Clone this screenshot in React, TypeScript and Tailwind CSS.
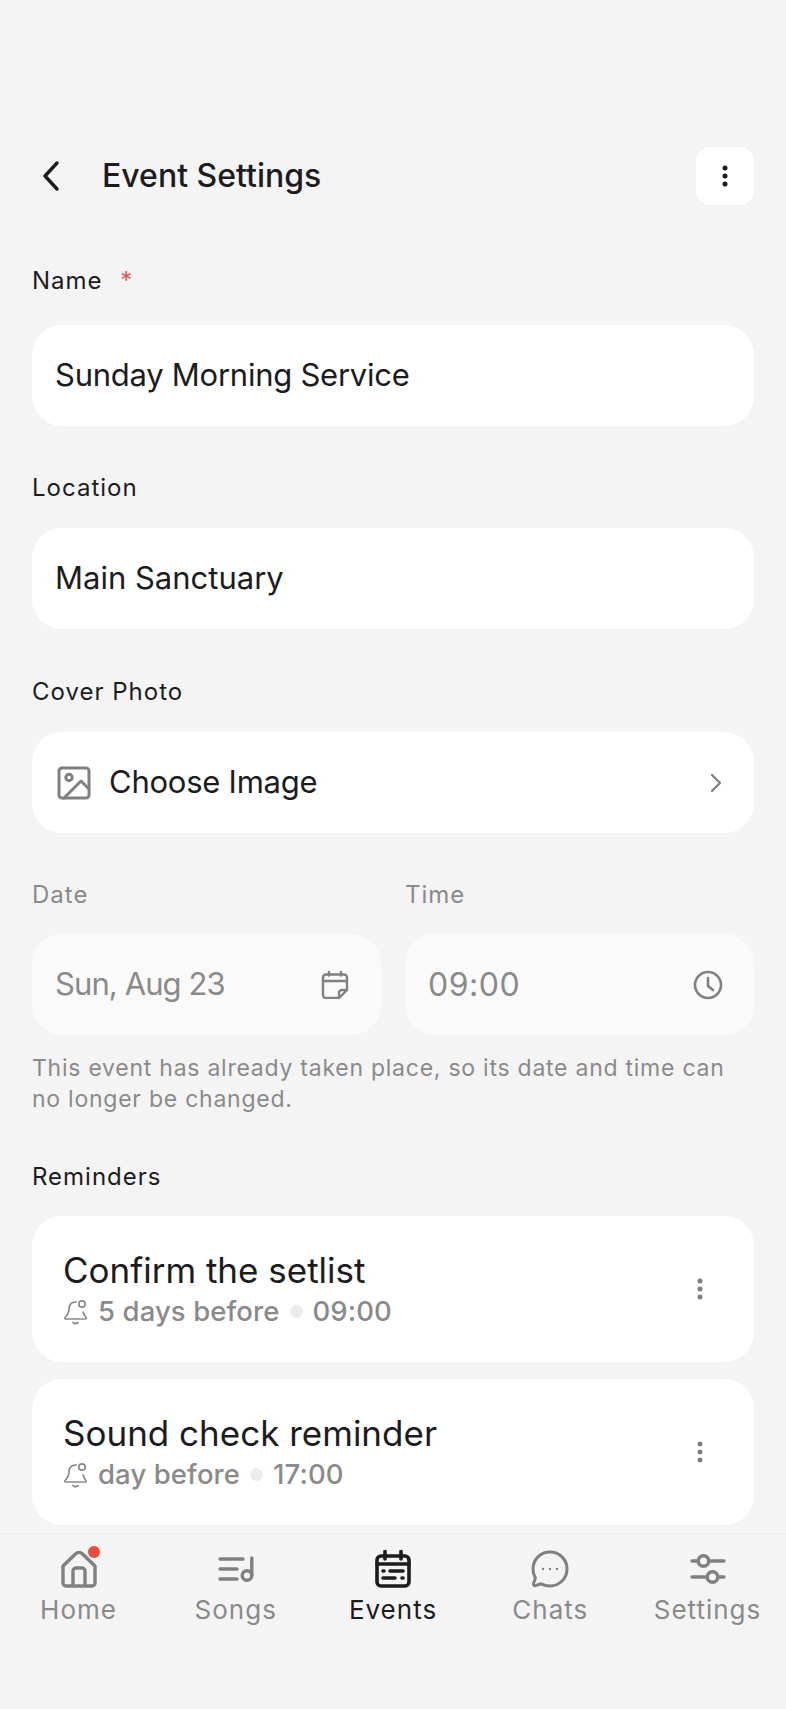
import { ChevronRight } from "lucide-react";

const font = "font-['Inter','Noto_Sans',sans-serif]";

function Label({ children, muted }: { children: React.ReactNode; muted?: boolean }) {
  return (
    <div className={`h-[32px] text-[24px] leading-[32px] tracking-[1px] ${muted ? "text-[#8a8a8a]" : "text-[#1c1c1e]"}`}>
      {children}
    </div>
  );
}

function Dots({ color }: { color: string }) {
  return (
    <svg width="6" height="24" viewBox="0 0 6 24" fill={color}>
      <circle cx="3" cy="4" r="2.5" />
      <circle cx="3" cy="12" r="2.5" />
      <circle cx="3" cy="20" r="2.5" />
    </svg>
  );
}

function ImageIcon() {
  return (
    <svg width="34" height="34" viewBox="0 0 34 34" fill="none" stroke="#808080" strokeWidth="3" strokeLinejoin="round" strokeLinecap="round">
      <rect x="2" y="2" width="30" height="30" rx="3" />
      <circle cx="12" cy="11.5" r="3.2" />
      <path d="M7 32 L24 15 L32 23" />
    </svg>
  );
}

function CalendarIcon() {
  return (
    <svg width="28" height="28" viewBox="0 0 28 28" fill="none" stroke="#808080" strokeWidth="2.4" strokeLinejoin="round" strokeLinecap="round">
      <path d="M5 3.5 H23 A3 3 0 0 1 26 6.5 V19 L18 27 H5 A3 3 0 0 1 2 24 V6.5 A3 3 0 0 1 5 3.5 Z" />
      <path d="M2 10 H26 M8 1 V4.5 M20 1 V4.5 M18 27 V22 A3 3 0 0 1 21 19 H26" />
    </svg>
  );
}

function ClockIcon() {
  return (
    <svg width="30" height="30" viewBox="0 0 30 30" fill="none" stroke="#808080" strokeWidth="2.6" strokeLinecap="round" strokeLinejoin="round">
      <circle cx="15" cy="15" r="13" />
      <path d="M15 8 V16 L20 20" />
    </svg>
  );
}

function BellIcon() {
  return (
    <svg width="25" height="26" viewBox="0 0 25 26" fill="none" stroke="#8a8a8a" strokeWidth="1.7" strokeLinecap="round" strokeLinejoin="round">
      <path d="M13 3.2 C8.5 2.6 6 6 6 10 C6 14 4.5 16 2 18.5 C1.6 19.2 2 20 3 20 H22 C23 20 23.4 19.2 23 18.5 C21.5 17 20.6 15.6 20.2 13" />
      <circle cx="19" cy="5" r="3.2" />
      <path d="M10 23.5 C11 25 14 25 15 23.5" />
    </svg>
  );
}

function Reminder({ title, when, time }: { title: string; when: string; time: string }) {
  return (
    <div className="flex h-[146px] shrink-0 items-center justify-between rounded-[30px] bg-white pl-[31px] pr-[51px]">
      <div className="flex flex-col">
        <div className="text-[35px] leading-[42px] text-[#1c1c1e]">{title}</div>
        <div className="mt-[3px] flex h-[36px] items-center text-[27.5px] font-medium tracking-[0.1px] text-[#8a8a8a]">
          <BellIcon />
          <span className="ml-[10px]">{when}</span>
          <span className="mx-[10px] h-[13px] w-[13px] rounded-full bg-[#ececec]" />
          <span>{time}</span>
        </div>
      </div>
      <Dots color="#808080" />
    </div>
  );
}

function NavItem({ label, active, icon, dot }: { label: string; active?: boolean; icon: React.ReactNode; dot?: boolean }) {
  return (
    <div className="flex w-[157px] flex-col items-center">
      <div className="relative flex h-[40px] items-center justify-center">
        {icon}
        {dot && <span className="absolute right-[-3px] top-[-3px] h-[12px] w-[12px] rounded-full bg-[#e74c3c]" />}
      </div>
      <div className={`mt-[4px] whitespace-nowrap text-[26px] leading-[34px] tracking-[1px] ${active ? "text-[#1c1c1e]" : "text-[#8a8a8a]"}`}>
        {label}
      </div>
    </div>
  );
}

export default function App() {
  return (
    <div className={`${font} flex h-[1709px] w-[786px] flex-col overflow-hidden bg-[#f4f4f4]`}>
      <div className="flex min-h-0 flex-1 flex-col overflow-hidden px-[32px] pt-[147px]">
        {/* Header */}
        <div className="flex h-[58px] shrink-0 items-center">
          <svg width="20" height="32" viewBox="0 0 20 32" fill="none" stroke="#1c1c1e" strokeWidth="3.4" strokeLinecap="round" strokeLinejoin="round" className="ml-[9px]">
            <path d="M16 3 L4 16 L16 29" />
          </svg>
          <div className="ml-[41px] flex-1 text-[32px] font-medium text-[#1c1c1e]">Event Settings</div>
          <div className="flex h-[58px] w-[58px] items-center justify-center rounded-[14px] bg-white">
            <Dots color="#1c1c1e" />
          </div>
        </div>

        <div className="mt-[60px]">
          <Label>
            Name <span className="ml-[10px] text-[#e55353]">*</span>
          </Label>
        </div>
        <div className="mt-[28px] flex h-[101px] shrink-0 items-center rounded-[30px] bg-white px-[23px] text-[31px] tracking-[-0.25px] text-[#1c1c1e]">
          Sunday Morning Service
        </div>

        <div className="mt-[46px]">
          <Label>Location</Label>
        </div>
        <div className="mt-[24px] flex h-[101px] shrink-0 items-center rounded-[30px] bg-white px-[23px] text-[31px] text-[#1c1c1e]">
          Main Sanctuary
        </div>

        <div className="mt-[47px]">
          <Label>Cover Photo</Label>
        </div>
        <div className="mt-[24px] flex h-[101px] shrink-0 items-center rounded-[30px] bg-white pl-[25px] pr-[22px] text-[31px] tracking-[-0.25px] text-[#1c1c1e]">
          <ImageIcon />
          <span className="ml-[18px] flex-1">Choose Image</span>
          <ChevronRight size={32} color="#808080" strokeWidth={1.8} />
        </div>

        <div className="mt-[46px] grid shrink-0 grid-cols-2 gap-x-[24px]">
          <div>
            <Label muted>Date</Label>
            <div className="mt-[23px] flex h-[101px] items-center justify-between rounded-[30px] bg-[#fafafa] pl-[23px] pr-[32px] text-[31px] tracking-[-0.9px] text-[#8a8a8a]">
              Sun, Aug 23
              <CalendarIcon />
            </div>
          </div>
          <div>
            <Label muted>Time</Label>
            <div className="mt-[23px] flex h-[101px] items-center justify-between rounded-[30px] bg-[#fafafa] pl-[23px] pr-[31px] text-[32px] tracking-[0.5px] text-[#8a8a8a]">
              09:00
              <ClockIcon />
            </div>
          </div>
        </div>

        <p className="mt-[18px] text-[23px] leading-[31px] tracking-[0.75px] text-[#8a8a8a]">
          This event has already taken place, so its date and time can no longer be changed.
        </p>

        <div className="mt-[46px]">
          <Label>Reminders</Label>
        </div>
        <div className="mt-[23px] flex flex-col gap-[17px]">
          <Reminder title="Confirm the setlist" when="5 days before" time="09:00" />
          <Reminder title="Sound check reminder" when="day before" time="17:00" />
        </div>
      </div>

      {/* Bottom nav */}
      <div className="flex h-[176px] shrink-0 justify-between border-t-2 border-[#eeeeee] pt-[14px]">
        <NavItem
          label="Home"
          dot
          icon={
            <svg width="36" height="38" viewBox="0 0 36 38" fill="none" stroke="#808080" strokeWidth="3.4" strokeLinejoin="round">
              <path d="M2 16 L15 3.5 C16.5 2 19.5 2 21 3.5 L34 16 V33 A3 3 0 0 1 31 36 H5 A3 3 0 0 1 2 33 Z" />
              <path d="M12 36 V21 A3 3 0 0 1 15 18 H21 A3 3 0 0 1 24 21 V36" />
            </svg>
          }
        />
        <NavItem
          label="Songs"
          icon={
            <svg width="36" height="26" viewBox="0 0 36 26" fill="none" stroke="#808080" strokeWidth="3.4" strokeLinecap="round">
              <path d="M2 3 H25 M2 13 H19 M2 23 H19" />
              <circle cx="29" cy="19.5" r="4.8" />
              <path d="M33.8 19.5 V2" />
            </svg>
          }
        />
        <NavItem
          label="Events"
          active
          icon={
            <svg width="36" height="38" viewBox="0 0 36 38" fill="none" stroke="#1c1c1e" strokeWidth="3.6" strokeLinecap="round" strokeLinejoin="round">
              <rect x="2" y="6" width="32" height="30" rx="4" />
              <path d="M2 14 H34 M10 1.5 V9 M26 1.5 V9" />
              <path d="M8 21 H9 M15 21 H28 M8 28 H20 M27 28 H28" />
            </svg>
          }
        />
        <NavItem
          label="Chats"
          icon={
            <svg width="38" height="38" viewBox="0 0 38 38" fill="none" stroke="#808080" strokeWidth="3">
              <path d="M19 2 C28.4 2 36 9.4 36 19 C36 28.4 28.4 36 19 36 C15.5 36 12.5 35 10 33.8 L4.5 35.6 C3 36 2 35 2.6 33.4 L4.4 28 C3 25.4 2 22.4 2 19 C2 9.4 9.6 2 19 2 Z" strokeLinejoin="round" />
              <circle cx="12" cy="19" r="1.2" fill="#808080" stroke="none" />
              <circle cx="19" cy="19" r="1.2" fill="#808080" stroke="none" />
              <circle cx="26" cy="19" r="1.2" fill="#808080" stroke="none" />
            </svg>
          }
        />
        <NavItem
          label="Settings"
          icon={
            <svg width="36" height="30" viewBox="0 0 36 30" fill="none" stroke="#808080" strokeWidth="3.4" strokeLinecap="round">
              <path d="M2 7 H7 M20 7 H34 M2 23 H16 M29 23 H34" />
              <circle cx="13.5" cy="7" r="5.2" />
              <circle cx="22.5" cy="23" r="5.2" />
            </svg>
          }
        />
      </div>
    </div>
  );
}
